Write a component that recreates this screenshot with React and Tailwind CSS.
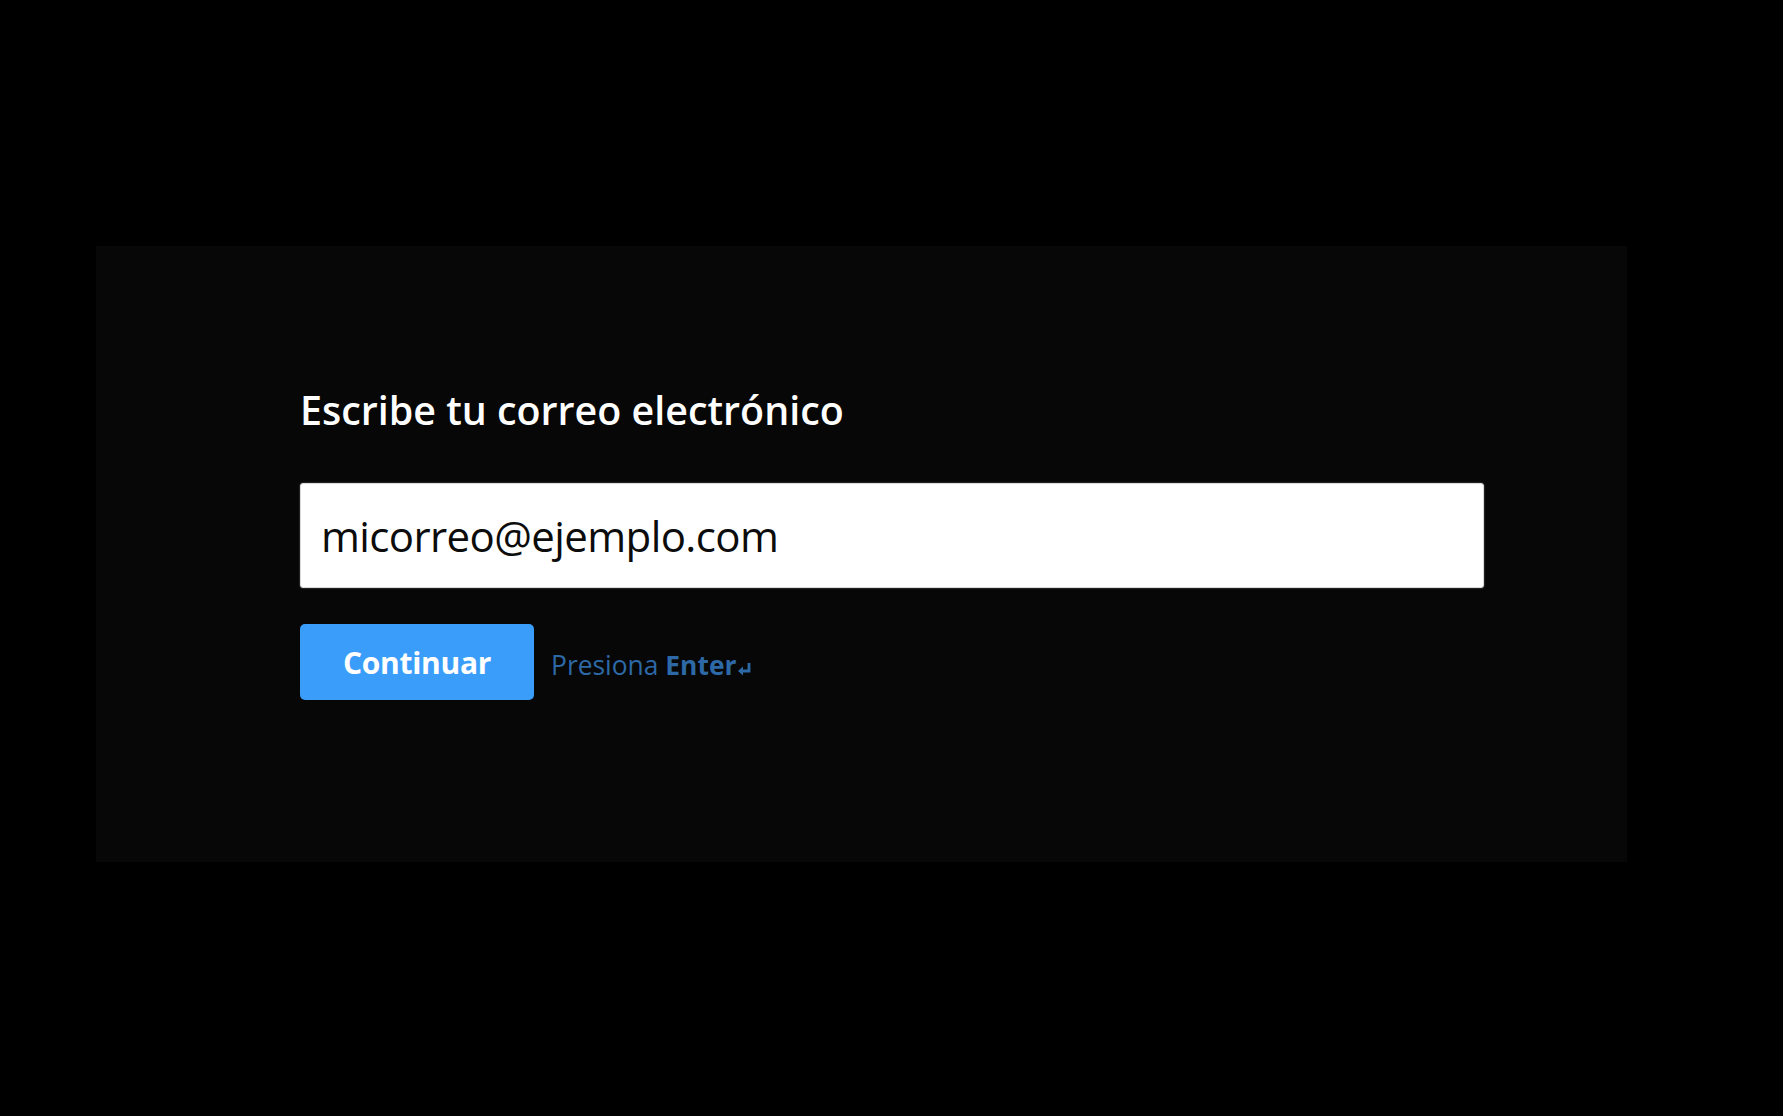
import React, { useState } from 'react';

function EnterArrow() {
  return (
    <svg width="15" height="14" viewBox="0 0 15 14" className="inline-block ml-[1px] mb-[-2px]">
      <path d="M12 1 L12 9 L4.5 9" fill="none" stroke="currentColor" strokeWidth="2.8" strokeLinecap="butt" />
      <path d="M1 9 L6 4.4 L6 13.6 Z" fill="currentColor" />
    </svg>
  );
}

function EmailStep({ email, setEmail }) {
  return (
    <div className="w-[1184px]">
      <h1 className="text-[39.4px] leading-[48px] font-semibold text-white">
        Escribe tu correo electrónico
      </h1>
      <input
        type="email"
        value={email}
        onChange={(e) => setEmail(e.target.value)}
        className="mt-[49px] block w-full h-[105px] pl-5 pr-5 bg-white text-[#0c0c0c] text-[42px] tracking-[-0.6px] rounded-[3px] border border-[#d9d9d9] shadow-[0_0_2px_rgba(255,255,255,0.4)] outline-none"
      />
      <div className="mt-9 flex items-center">
        <button className="w-[234px] h-[76px] rounded-[5px] bg-[#3a9dfa] text-white text-[30px] font-bold tracking-[-0.3px]">
          Continuar
        </button>
        <span className="ml-[17px] pt-[7px] text-[26.4px] text-[#2d69a6]">
          Presiona <span className="font-bold">Enter</span>
          <EnterArrow />
        </span>
      </div>
    </div>
  );
}

function App() {
  const [email, setEmail] = useState('micorreo@ejemplo.com');

  return (
    <div className="min-h-screen bg-black pt-[246px] font-['Open_Sans',sans-serif]">
      <div className="ml-[96px] w-[1531px] h-[616px] bg-[#070707] pl-[204px] pt-[140px]">
        <EmailStep email={email} setEmail={setEmail} />
      </div>
    </div>
  );
}

export default App;
